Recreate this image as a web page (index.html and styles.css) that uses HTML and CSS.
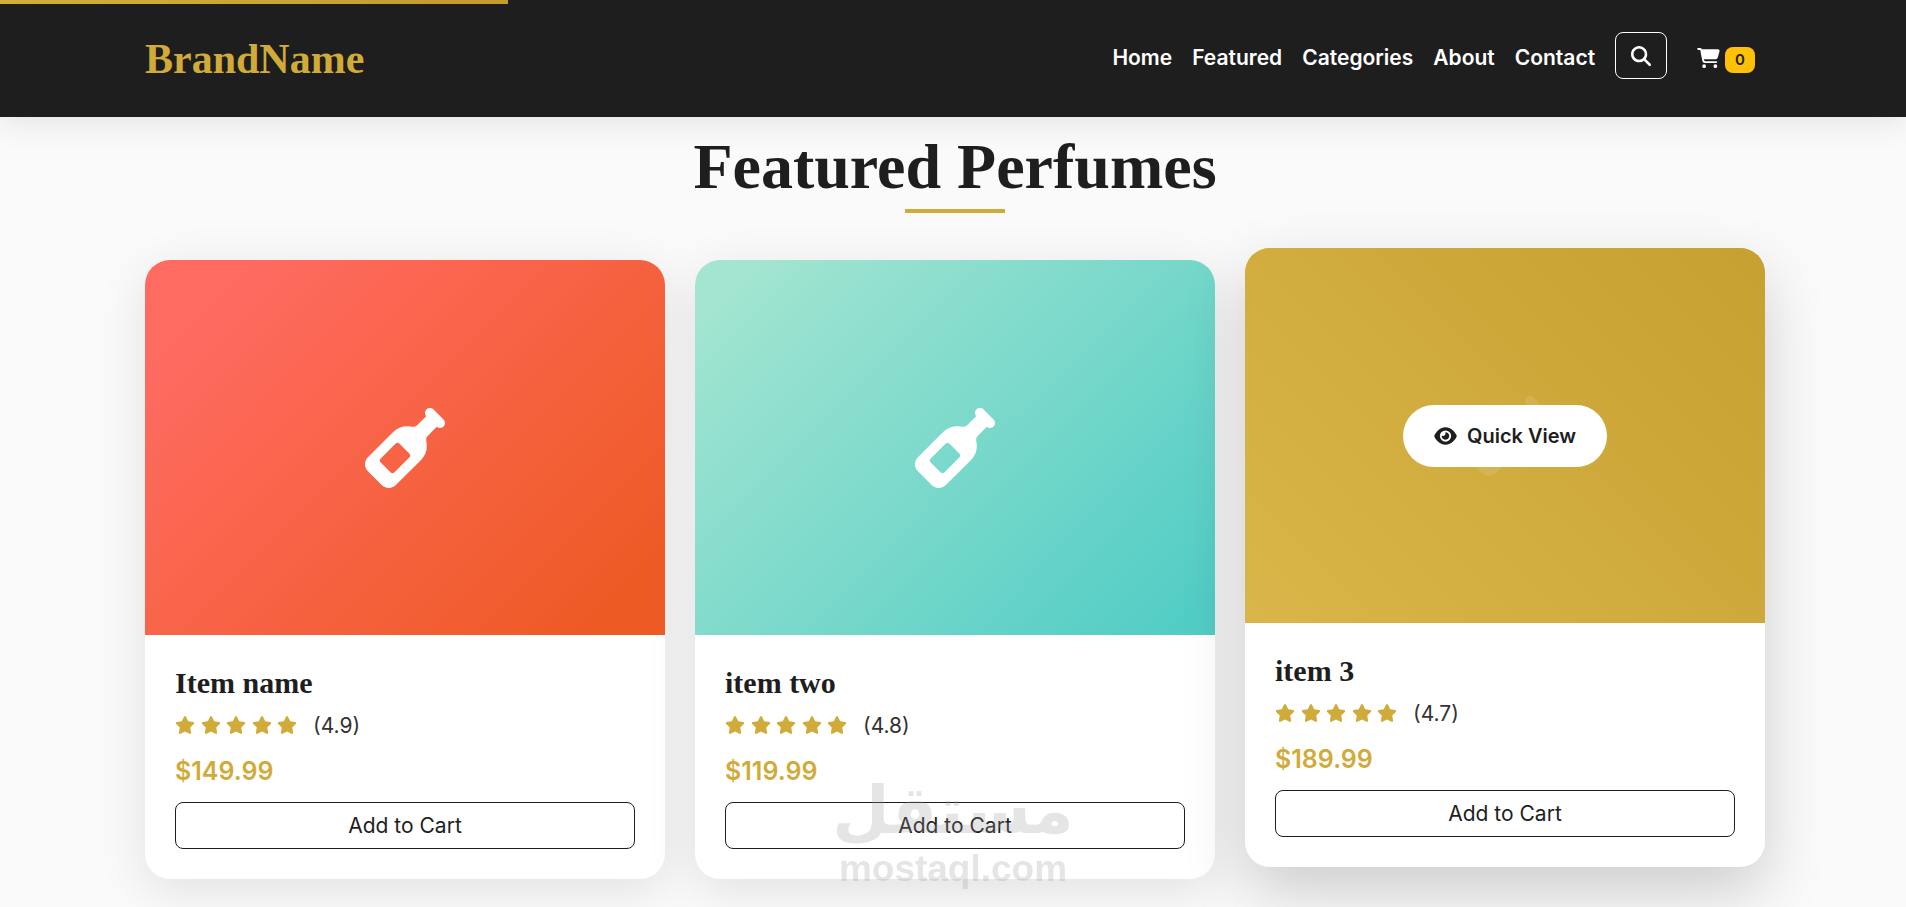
FILE: index.html
```
<!DOCTYPE html>
<html lang="en">
<head>
  <meta charset="UTF-8">
  <meta name="viewport" content="width=device-width, initial-scale=1.0">
  <title>BrandName - Featured Perfumes</title>
  <link rel="stylesheet" href="styles.css">
</head>
<body>
<svg class="icon-defs" aria-hidden="true">
  <symbol id="icon-search" viewBox="0 0 512 512">
    <path d="M416 208c0 45.9-14.9 88.3-40 122.7L502.6 457.4c12.5 12.5 12.5 32.8 0 45.3s-32.8 12.5-45.3 0L330.7 376c-34.4 25.2-76.8 40-122.7 40C93.1 416 0 322.9 0 208S93.1 0 208 0S416 93.1 416 208zM208 352a144 144 0 1 0 0-288 144 144 0 1 0 0 288z"/>
  </symbol>
  <symbol id="icon-cart" viewBox="0 0 576 512">
    <path d="M0 24C0 10.7 10.7 0 24 0H69.5c22 0 41.5 12.8 50.6 32h411c26.3 0 45.5 25 38.6 50.4l-41 152.3c-8.5 31.4-37 53.3-69.5 53.3H170.7l5.4 28.5c2.2 11.3 12.1 19.5 23.6 19.5H488c13.3 0 24 10.7 24 24s-10.7 24-24 24H199.7c-34.6 0-64.3-24.6-70.7-58.5L77.4 54.5c-.7-3.8-4-6.5-7.9-6.5H24C10.7 48 0 37.3 0 24zM128 464a48 48 0 1 1 96 0 48 48 0 1 1 -96 0zm336-48a48 48 0 1 1 0 96 48 48 0 1 1 0-96z"/>
  </symbol>
  <symbol id="icon-eye" viewBox="0 0 576 512">
    <path d="M288 32c-80.8 0-145.5 36.8-192.6 80.6C48.6 156 17.3 208 2.5 243.7c-3.3 7.9-3.3 16.7 0 24.6C17.3 304 48.6 356 95.4 399.4C142.5 443.2 207.2 480 288 480s145.5-36.8 192.6-80.6c46.8-43.5 78.1-95.4 93-131.1c3.3-7.9 3.3-16.7 0-24.6c-14.9-35.7-46.2-87.7-93-131.1C433.5 68.8 368.8 32 288 32zM144 256a144 144 0 1 1 288 0 144 144 0 1 1 -288 0zm144-64c0 35.3-28.7 64-64 64c-7.1 0-13.9-1.2-20.3-3.3c-5.5-1.8-11.9 1.6-11.7 7.4c.3 6.9 1.3 13.8 3.2 20.7c13.7 51.2 66.4 81.6 117.6 67.9s81.6-66.4 67.9-117.6c-11.1-41.5-47.8-69.4-88.6-71.1c-5.8-.2-9.2 6.1-7.4 11.7c2.1 6.4 3.3 13.2 3.3 20.3z"/>
  </symbol>
  <symbol id="icon-star" viewBox="0 0 576 512">
    <path d="M316.9 18C311.6 7 300.4 0 288.1 0s-23.4 7-28.8 18L195 150.3 51.4 171.5c-12 1.8-22 10.2-25.7 21.7s-.7 24.2 7.9 32.7L137.8 329 113.2 474.7c-2 12 3 24.2 12.9 31.3s23 8 33.8 2.3l128.3-68.5 128.3 68.5c10.8 5.7 23.9 4.9 33.8-2.3s14.9-19.3 12.9-31.3L438.5 329 542.7 225.9c8.6-8.5 11.7-21.2 7.9-32.7s-13.7-19.9-25.7-21.7L381.2 150.3 316.9 18z"/>
  </symbol>
  <symbol id="icon-bottle" viewBox="0 0 512 512">
    <path d="M393.4 9.4c12.5-12.5 32.8-12.5 45.3 0l64 64c12.5 12.5 12.5 32.8 0 45.3c-11.8 11.8-30.7 12.5-43.2 1.9l-9.5 9.5-48.8 48.8c-9.2 9.2-11.5 22.9-8.6 35.6c9.4 40.9-1.9 85.6-33.8 117.5L197.3 493.3c-25 25-65.5 25-90.5 0l-88-88c-25-25-25-65.5 0-90.5L180.2 153.3c31.9-31.9 76.6-43.1 117.5-33.8c12.6 2.9 26.4 .5 35.5-8.6l48.8-48.8 9.5-9.5c-10.6-12.6-10-31.4 1.9-43.2zM99.3 347.3l65.4 65.4c6.2 6.2 16.4 6.2 22.6 0l97.4-97.4c6.2-6.2 6.2-16.4 0-22.6l-65.4-65.4c-6.2-6.2-16.4-6.2-22.6 0L99.3 324.7c-6.2 6.2-6.2 16.4 0 22.6z"/>
  </symbol>
</svg>

<div class="scroll-progress"></div>

<header class="site-header">
  <div class="container header-inner">
    <a href="#" class="brand">BrandName</a>
    <nav class="main-nav">
      <a href="#home">Home</a>
      <a href="#featured">Featured</a>
      <a href="#categories">Categories</a>
      <a href="#about">About</a>
      <a href="#contact">Contact</a>
      <button type="button" class="search-btn" aria-label="Search">
        <svg class="icon-search"><use href="#icon-search"/></svg>
      </button>
      <a href="#cart" class="cart-link" aria-label="Cart">
        <svg class="icon-cart"><use href="#icon-cart"/></svg>
        <span class="cart-count">0</span>
      </a>
    </nav>
  </div>
</header>

<main class="featured" id="featured">
  <div class="container">
    <h1 class="section-title">Featured Perfumes</h1>
    <div class="product-grid">
      <article class="product-card">
        <div class="product-image image-coral">
          <svg class="icon-bottle"><use href="#icon-bottle"/></svg>
        </div>
        <div class="product-info">
          <h2 class="product-name">Item name</h2>
          <div class="rating">
            <div class="stars">
              <svg><use href="#icon-star"/></svg>
              <svg><use href="#icon-star"/></svg>
              <svg><use href="#icon-star"/></svg>
              <svg><use href="#icon-star"/></svg>
              <svg><use href="#icon-star"/></svg>
            </div>
            <span>(4.9)</span>
          </div>
          <p class="price">$149.99</p>
          <button type="button" class="add-btn">Add to Cart</button>
        </div>
      </article>

      <article class="product-card">
        <div class="product-image image-mint">
          <svg class="icon-bottle"><use href="#icon-bottle"/></svg>
        </div>
        <div class="product-info">
          <h2 class="product-name">item two</h2>
          <div class="rating">
            <div class="stars">
              <svg><use href="#icon-star"/></svg>
              <svg><use href="#icon-star"/></svg>
              <svg><use href="#icon-star"/></svg>
              <svg><use href="#icon-star"/></svg>
              <svg><use href="#icon-star"/></svg>
            </div>
            <span>(4.8)</span>
          </div>
          <p class="price">$119.99</p>
          <button type="button" class="add-btn">Add to Cart</button>
        </div>
      </article>

      <article class="product-card active">
        <div class="product-image image-gold">
          <svg class="icon-bottle"><use href="#icon-bottle"/></svg>
          <div class="overlay">
            <button type="button" class="quick-view">
              <svg class="icon-eye"><use href="#icon-eye"/></svg>
              Quick View
            </button>
          </div>
        </div>
        <div class="product-info">
          <h2 class="product-name">item 3</h2>
          <div class="rating">
            <div class="stars">
              <svg><use href="#icon-star"/></svg>
              <svg><use href="#icon-star"/></svg>
              <svg><use href="#icon-star"/></svg>
              <svg><use href="#icon-star"/></svg>
              <svg><use href="#icon-star"/></svg>
            </div>
            <span>(4.7)</span>
          </div>
          <p class="price">$189.99</p>
          <button type="button" class="add-btn">Add to Cart</button>
        </div>
      </article>
    </div>
  </div>
</main>

<div class="watermark">
  <span class="watermark-ar" lang="ar" dir="rtl">مستقل</span>
  <span class="watermark-en">mostaql.com</span>
</div>
</body>
</html>
```

FILE: styles.css
```
* {
  box-sizing: border-box;
}
body {
  margin: 0;
  font-family: Inter, sans-serif;
  font-size: 21px;
  color: #1e1e1e;
  background: #fafafa;
}
svg {
  fill: currentColor;
  display: block;
}
button {
  font-family: inherit;
  cursor: pointer;
}
.icon-defs {
  display: none;
}
.container {
  max-width: 1624px;
  margin: 0 auto;
  padding-left: 4px;
}

/* Header */
.scroll-progress {
  position: fixed;
  top: 0;
  left: 0;
  z-index: 10;
  width: 508px;
  height: 4px;
  background: linear-gradient(90deg, #d4af37, #c49b2c);
}
.site-header {
  position: relative;
  padding: 28px 0 34px;
  background: #1e1e1e;
  box-shadow: 0 4px 30px rgba(0, 0, 0, 0.1);
}
.header-inner {
  display: flex;
  align-items: center;
  justify-content: space-between;
}
.brand {
  padding-top: 8px;
  font-family: "Liberation Serif", serif;
  font-size: 42px;
  line-height: 47px;
  font-weight: 700;
  color: #d1ab3a;
  text-decoration: none;
}
.main-nav {
  display: flex;
  align-items: center;
  gap: 20px;
}
.main-nav a {
  padding-top: 4px;
  color: #fff;
  font-weight: 600;
  text-decoration: none;
}
.search-btn {
  width: 52px;
  height: 47px;
  padding: 0 15px;
  color: #fff;
  background: none;
  border: 1px solid #fff;
  border-radius: 8px;
}
.icon-search {
  width: 20px;
  height: 20px;
}
.main-nav .cart-link {
  display: flex;
  align-items: center;
  gap: 5px;
  padding: 8px 10px 0;
}
.icon-cart {
  width: 23px;
  height: 20px;
  margin-bottom: 4px;
}
.cart-count {
  padding: 4px 10px;
  font-size: 15px;
  line-height: 18px;
  color: #1e1e1e;
  background: #ffc107;
  border-radius: 8px;
}

/* Featured products */
.featured {
  padding: 8px 0 28px;
}
.section-title {
  margin: 0 0 47px;
  font-family: "Liberation Serif", serif;
  font-size: 64px;
  line-height: 84px;
  font-weight: 700;
  text-align: center;
}
.section-title::after {
  content: "";
  display: block;
  width: 100px;
  height: 4px;
  margin: 0 auto;
  background: #d1ab3a;
}
.product-grid {
  display: grid;
  grid-template-columns: repeat(3, 1fr);
  gap: 30px;
}
.product-card {
  overflow: hidden;
  background: #fff;
  border-radius: 25px;
  box-shadow: 0 12px 50px rgba(0, 0, 0, 0.1);
}
.product-card.active {
  transform: translateY(-12px);
  box-shadow: 0 25px 62px rgba(0, 0, 0, 0.18);
}
.product-image {
  position: relative;
  display: flex;
  align-items: center;
  justify-content: center;
  height: 375px;
  color: #fff;
}
.image-coral {
  background: linear-gradient(135deg, #ff6b61 12%, #ee5a24 92%);
}
.image-mint {
  background: linear-gradient(135deg, #a4e5d1 5%, #52cdc5 95%);
}
.image-gold {
  background: linear-gradient(45deg, #dab549, #c6a030);
}
.icon-bottle {
  width: 80px;
  height: 80px;
}
.overlay {
  position: absolute;
  inset: 0;
  display: flex;
  align-items: center;
  justify-content: center;
  background: linear-gradient(45deg, rgba(218, 181, 73, 0.9), rgba(198, 160, 48, 0.9));
}
.quick-view {
  display: flex;
  align-items: center;
  gap: 10px;
  padding: 19px 31px;
  font-size: 20px;
  line-height: 24px;
  font-weight: 600;
  color: #1e1e1e;
  background: #fff;
  border: 0;
  border-radius: 50px;
}
.icon-eye {
  width: 23px;
  height: 20px;
}
.product-info {
  padding: 30px;
}
.product-name {
  margin: 0 0 8px;
  font-family: "Liberation Serif", serif;
  font-size: 30px;
  line-height: 36px;
  font-weight: 700;
}
.rating {
  display: flex;
  align-items: center;
  gap: 16px;
  height: 32px;
  color: #333;
}
.stars {
  display: flex;
  justify-content: space-between;
  width: 122px;
  color: #d1ab3a;
}
.stars svg {
  width: 20px;
  height: 18px;
}
.price {
  margin: 10px 0;
  font-size: 25px;
  line-height: 41px;
  font-weight: 600;
  color: #d1ab3a;
}
.add-btn {
  width: 100%;
  height: 47px;
  font-size: 21px;
  color: #1e1e1e;
  background: none;
  border: 1px solid #1e1e1e;
  border-radius: 8px;
}

/* Watermark over the bottom of the page */
.watermark {
  position: fixed;
  right: 0;
  bottom: 18px;
  left: 0;
  display: flex;
  flex-direction: column;
  align-items: center;
  color: #969696;
  opacity: 0.25;
  pointer-events: none;
}
.watermark-ar {
  font-family: "DejaVu Sans", sans-serif;
  font-size: 66px;
  line-height: 76px;
  font-weight: 700;
}
.watermark-en {
  font-family: "Liberation Sans", sans-serif;
  font-size: 37px;
  line-height: 40px;
  font-weight: 700;
}
```
